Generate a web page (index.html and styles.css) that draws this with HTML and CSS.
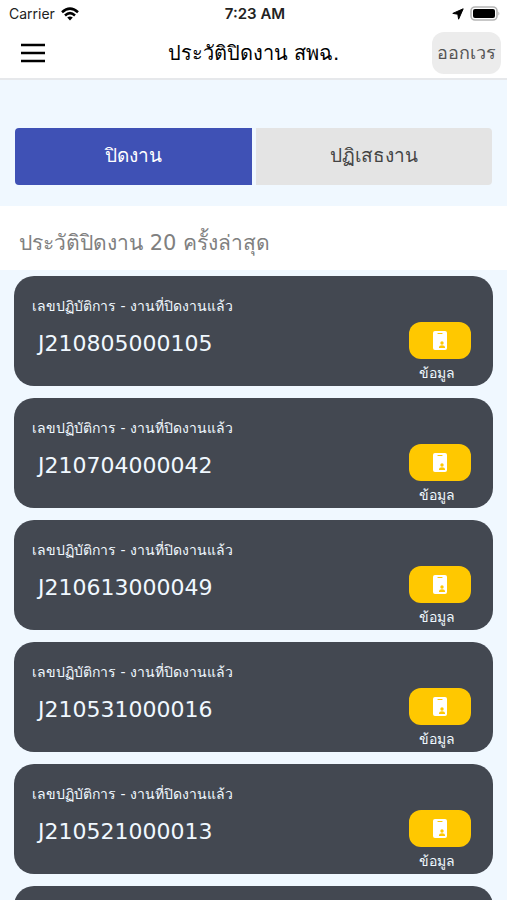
FILE: index.html
```
<!DOCTYPE html>
<html lang="th">
<head>
    <meta charset="UTF-8">
    <meta name="viewport" content="width=device-width, initial-scale=1.0">
    <title>ประวัติปิดงาน สพฉ.</title>
    <link rel="stylesheet" href="styles.css">
</head>
<body>
    <header class="top">
        <div class="status">
            <div class="status-left">
                <span>Carrier</span>
                <svg width="18" height="14" viewBox="0 0 18 14" fill="none" stroke="#000" stroke-width="2.6">
                    <path d="M1 5.2 Q9 -1.8 17 5.2"/>
                    <path d="M4 8.4 Q9 4 14 8.4"/>
                    <path d="M9 13.6 L6.2 10.6 Q9 8.6 11.8 10.6 Z" fill="#000" stroke="none"/>
                </svg>
            </div>
            <div class="status-time">7:23 AM</div>
            <div class="status-right">
                <svg width="12" height="12" viewBox="0 0 12 12"><path d="M11.2 0.8 L0.8 5.4 L5.8 6.2 L6.6 11.2 Z" stroke="#000" stroke-width="1" stroke-linejoin="round"/></svg>
                <svg width="31" height="16" viewBox="0 0 31 16">
                    <rect x="1" y="1" width="26" height="13" rx="4" fill="#fff" stroke="#b5b5b5" stroke-width="1.6"/>
                    <rect x="3" y="3" width="22" height="9" rx="2"/>
                    <path d="M28.4 5.4 Q30.4 7.5 28.4 9.6 Z" fill="#b5b5b5"/>
                </svg>
            </div>
        </div>
        <div class="navbar">
            <button class="menu-btn" aria-label="เมนู">
                <svg width="26" height="20" viewBox="0 0 26 20" stroke="#000" stroke-width="2.6">
                    <path d="M1 2 H25 M1 10 H25 M1 18 H25"/>
                </svg>
            </button>
            <h1>ประวัติปิดงาน สพฉ.</h1>
            <button class="leave-btn">ออกเวร</button>
        </div>
    </header>

    <div class="tabs">
        <button class="tab active">ปิดงาน</button>
        <button class="tab">ปฏิเสธงาน</button>
    </div>

    <h2 class="list-title">ประวัติปิดงาน 20 ครั้งล่าสุด</h2>

    <main id="jobList" class="job-list"></main>

    <script src="script.js"></script>
</body>
</html>
```

FILE: styles.css
```
* { box-sizing: border-box; }
body {
    display: flex;
    flex-direction: column;
    height: 100vh;
    margin: 0;
    background: #f0f8ff;
    font-family: "DejaVu Sans", "Noto Sans", sans-serif;
    color: #000;
}
button {
    border: none;
    padding: 0;
    font-family: inherit;
    cursor: pointer;
}
svg { display: block; }

/* Header */
.top {
    background: #fff;
    border-bottom: 2px solid #e6e8eb;
}
.status {
    display: grid;
    grid-template-columns: 1fr auto 1fr;
    align-items: center;
    height: 27px;
    padding: 0 6px 0 9px;
    font-family: Inter, sans-serif;
    font-size: 14px;
    color: #222;
}
.status-left, .status-right {
    display: flex;
    align-items: center;
    gap: 6px;
}
.status-right { justify-content: flex-end; }
.status-time {
    font-size: 15px;
    font-weight: 600;
}
.navbar {
    display: grid;
    grid-template-columns: 1fr auto 1fr;
    align-items: center;
    height: 51px;
    padding: 0 6px;
}
.menu-btn {
    justify-self: start;
    padding-left: 14px;
    background: none;
}
h1 {
    margin: 0;
    font-size: 20px;
    font-weight: 500;
}
.leave-btn {
    justify-self: end;
    width: 69px;
    height: 42px;
    border-radius: 12px;
    background: #ececec;
    color: #555;
    font-size: 18px;
}

/* Tabs */
.tabs {
    display: flex;
    gap: 4px;
    padding: 48px 15px 21px;
}
.tab {
    flex: 1;
    height: 57px;
    padding-bottom: 4px;
    background: #e4e4e4;
    color: #444;
    font-size: 19px;
}
.tab:first-child { border-radius: 4px 0 0 4px; }
.tab:last-child { border-radius: 0 4px 4px 0; }
.tab.active {
    background: #3f51b5;
    color: #fff;
}

.list-title {
    margin: 0;
    padding: 5px 19px 0;
    height: 64px;
    line-height: 64px;
    background: #fff;
    color: #808080;
    font-size: 21px;
    font-weight: 400;
}

/* Job cards */
.job-list {
    flex: 1;
    display: flex;
    flex-direction: column;
    gap: 12px;
    min-height: 0;
    padding: 6px 14px 12px;
    overflow-y: auto;
    scrollbar-width: none;
}
.job {
    flex: none;
    display: flex;
    justify-content: space-between;
    height: 110px;
    padding: 20px 22px 0 18px;
    border-radius: 20px;
    background: #434851;
    color: #f0f8ff;
}
.job-label {
    margin: 0;
    font-size: 14px;
    line-height: 20px;
}
.job-number {
    margin: 13px 0 0 6px;
    font-size: 22px;
    line-height: 30px;
}
.job-action {
    display: flex;
    flex-direction: column;
    align-items: center;
    padding-top: 26px;
}
.info-btn {
    display: flex;
    justify-content: center;
    align-items: center;
    width: 62px;
    height: 37px;
    border-radius: 12px;
    background: #ffc800;
}
.info-text {
    padding: 4px 6px 0 0;
    font-size: 14px;
    line-height: 20px;
}
```

FILE: script.js
```
const jobs = [
    "J210805000105",
    "J210704000042",
    "J210613000049",
    "J210531000016",
    "J210521000013"
];

const badgeIcon = `<svg width="14" height="20" viewBox="0 0 14 20">
    <rect width="14" height="19" rx="2" fill="#fff"/>
    <path d="M5 2.5 H9" stroke="#ffc800" stroke-width="1.2" stroke-linecap="round"/>
    <circle cx="9" cy="12" r="1.7" fill="#ffc800"/>
    <path d="M6 17 V16 Q6 14.4 9 14.2 Q12 14.4 12 16 V17 Z" fill="#ffc800"/>
</svg>`;

const jobList = document.getElementById('jobList');
jobs.forEach((job, i) => {
    const card = document.createElement('div');
    card.className = 'job';
    card.innerHTML = `
        <div>
            <p class="job-label">เลขปฏิบัติการ - งานที่ปิดงานแล้ว</p>
            <p class="job-number">${job}</p>
        </div>
        <div class="job-action">
            <button class="info-btn" aria-labelledby="info${i}">${badgeIcon}</button>
            <span class="info-text" id="info${i}">ข้อมูล</span>
        </div>`;
    jobList.appendChild(card);
});

const placeholder = document.createElement('div');
placeholder.className = 'job';
jobList.appendChild(placeholder);
```
